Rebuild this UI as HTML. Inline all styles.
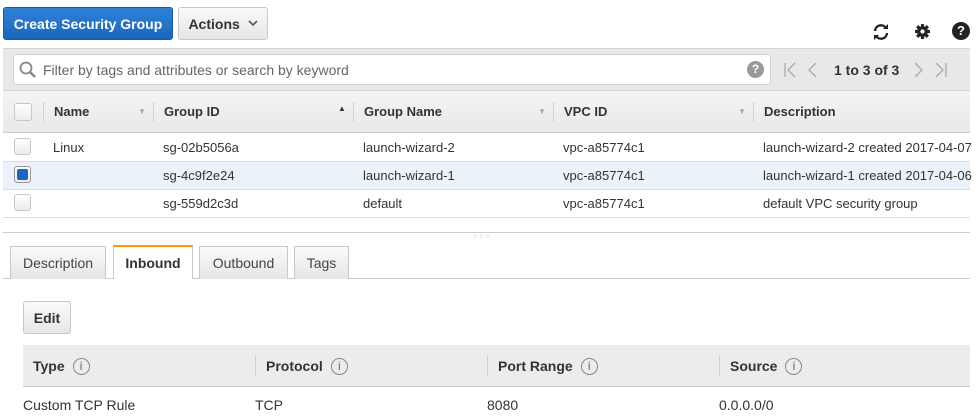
<!DOCTYPE html>
<html><head><style>
*{box-sizing:border-box}
body{margin:0;width:977px;height:420px;overflow:hidden;background:#fff;font-family:"Liberation Sans",Arial,sans-serif;font-size:13px;color:#333;position:relative}
.a{position:absolute}
.btn{position:absolute;border-radius:3px;font-weight:bold;font-size:14px;display:flex;align-items:center;justify-content:center}
.cb{position:absolute;width:17px;height:17px;border:1px solid #c8c8c8;border-radius:3px;background:linear-gradient(#fff,#ececec)}
.hd{position:absolute;font-weight:bold;font-size:13px;color:#333;display:flex;align-items:center}
.vd{position:absolute;width:1px;background:#d0d0d0}
.hl{position:absolute;height:1px;background:#ddd}
.tab{position:absolute;top:246px;height:33px;border:1px solid #c8c8c8;border-bottom:none;background:linear-gradient(#fafafa,#e6e6e6);font-size:14px;display:flex;align-items:center;justify-content:center;color:#444}
.ic{display:inline-block;width:17px;height:17px;border:1px solid #888;border-radius:50%;font-size:12px;font-weight:normal;text-align:center;line-height:15px;color:#666;margin-left:8px}
</style></head><body>
<div class="btn" style="left:3px;top:7px;width:170px;height:33px;background:linear-gradient(#2f82d8,#1a66bd);border:1px solid #1a5aa8;color:#fff">Create Security Group</div>
<div class="btn" style="left:178px;top:7px;width:90px;height:33px;background:linear-gradient(#fafafa,#e6e6e6);border:1px solid #c8c8c8;color:#333">Actions&nbsp;&nbsp;<svg width="10" height="7" viewBox="0 0 10 7"><path d="M1 1l4 4 4-4" stroke="#555" stroke-width="1.6" fill="none"/></svg></div>
<svg class="a" style="left:871px;top:22px" width="20" height="20" viewBox="0 0 20 20"><path d="M4 9a6 6 0 0 1 11-3" stroke="#222" stroke-width="2.4" fill="none"/><path d="M16 11a6 6 0 0 1-11 3" stroke="#222" stroke-width="2.4" fill="none"/><path d="M12 7h5V2z" fill="#222"/><path d="M8 13H3v5z" fill="#222"/></svg>
<svg class="a" style="left:914px;top:23px" width="17" height="17" viewBox="0 0 16 16"><circle cx="8" cy="8" r="5" fill="#222"/><g stroke="#222" stroke-width="3"><path d="M8 1v14M1 8h14M3 3l10 10M13 3L3 13"/></g><circle cx="8" cy="8" r="2" fill="#fff"/></svg>
<div class="a" style="left:952px;top:22px;width:18px;height:18px;border-radius:50%;background:#222;color:#fff;font-weight:bold;font-size:13px;text-align:center;line-height:18px">?</div>
<div class="a" style="left:3px;top:48px;width:967px;height:42px;background:#e8e8e8;border-top:1px solid #d5d5d5"></div>
<div class="a" style="left:13px;top:54px;width:758px;height:31px;background:#fff;border:1px solid #d0d0d0;border-radius:3px"></div>
<svg class="a" style="left:19px;top:61px" width="18" height="18" viewBox="0 0 18 18"><circle cx="7" cy="7" r="5.5" stroke="#888" stroke-width="1.8" fill="none"/><path d="M11 11l5 5" stroke="#888" stroke-width="2.5"/></svg>
<div class="a" style="left:43px;top:62px;font-size:14px;color:#666">Filter by tags and attributes or search by keyword</div>
<div class="a" style="left:747px;top:61px;width:17px;height:17px;border-radius:50%;background:#999;color:#fff;font-weight:bold;font-size:12px;text-align:center;line-height:17px">?</div>
<svg class="a" style="left:783px;top:62px" width="40" height="16" viewBox="0 0 40 16"><g stroke="#aaa" stroke-width="1.3" fill="none"><path d="M2 1v14M12 1L5 8l7 7M33 1l-7 7 7 7"/></g></svg>
<div class="a" style="left:834px;top:62px;font-size:14px;font-weight:bold;color:#333">1 to 3 of 3</div>
<svg class="a" style="left:912px;top:62px" width="40" height="16" viewBox="0 0 40 16"><g stroke="#aaa" stroke-width="1.3" fill="none"><path d="M3 1l7 7-7 7M24 1l7 7-7 7M34 1v14"/></g></svg>
<div class="a" style="left:3px;top:90px;width:967px;height:43px;background:linear-gradient(#f4f4f4,#e9e9e9);border-top:1px solid #d5d5d5;border-bottom:1px solid #ccc"></div>
<div class="cb" style="left:14px;top:103px;width:18px;height:18px"></div>
<div class="vd" style="left:43px;top:102px;height:20px"></div>
<div class="hd" style="left:54px;top:104px">Name</div><div class="a" style="left:138px;top:107px;font-size:8px;color:#aaa">&#9660;</div>
<div class="vd" style="left:153px;top:102px;height:20px"></div>
<div class="hd" style="left:164px;top:104px">Group ID</div><div class="a" style="left:338px;top:104px;font-size:8px;color:#333">&#9650;</div>
<div class="vd" style="left:353px;top:102px;height:20px"></div>
<div class="hd" style="left:364px;top:104px">Group Name</div><div class="a" style="left:538px;top:107px;font-size:8px;color:#aaa">&#9660;</div>
<div class="vd" style="left:553px;top:102px;height:20px"></div>
<div class="hd" style="left:564px;top:104px">VPC ID</div><div class="a" style="left:738px;top:107px;font-size:8px;color:#aaa">&#9660;</div>
<div class="vd" style="left:753px;top:102px;height:20px"></div>
<div class="hd" style="left:764px;top:104px">Description</div>
<div class="a" style="left:3px;top:162px;width:967px;height:28px;background:#eaf2fc"></div>
<div class="hl" style="left:3px;top:161px;width:967px"></div>
<div class="hl" style="left:3px;top:189px;width:967px"></div>
<div class="hl" style="left:3px;top:217px;width:967px"></div>
<div class="cb" style="left:14px;top:138px"></div>
<div class="cb" style="left:14px;top:166px;border-color:#999"></div><div class="a" style="left:17px;top:169px;width:11px;height:11px;background:#1a66c4;border-radius:2px"></div>
<div class="cb" style="left:14px;top:194px"></div>
<div class="a" style="left:53px;top:140px">Linux</div>
<div class="a" style="left:163px;top:140px">sg-02b5056a</div><div class="a" style="left:363px;top:140px">launch-wizard-2</div><div class="a" style="left:563px;top:140px">vpc-a85774c1</div><div class="a" style="left:763px;top:140px;white-space:nowrap">launch-wizard-2 created 2017-04-07</div>
<div class="a" style="left:163px;top:168px">sg-4c9f2e24</div><div class="a" style="left:363px;top:168px">launch-wizard-1</div><div class="a" style="left:563px;top:168px">vpc-a85774c1</div><div class="a" style="left:763px;top:168px;white-space:nowrap">launch-wizard-1 created 2017-04-06</div>
<div class="a" style="left:163px;top:196px">sg-559d2c3d</div><div class="a" style="left:363px;top:196px">default</div><div class="a" style="left:563px;top:196px">vpc-a85774c1</div><div class="a" style="left:763px;top:196px">default VPC security group</div>
<div class="hl" style="left:3px;top:232px;width:967px;background:#ccc"></div>
<div class="a" style="left:473px;top:233px;font-size:7px;color:#bbb;letter-spacing:2px">&#9675;&#9675;&#9675;</div>
<div class="hl" style="left:3px;top:278px;width:967px;background:#ccc"></div>
<div class="tab" style="left:10px;width:96px">Description</div>
<div class="tab" style="left:113px;width:80px;background:#fff;border-top:2px solid #f90;top:245px;height:34px;font-weight:bold;color:#333">Inbound</div>
<div class="tab" style="left:199px;width:89px">Outbound</div>
<div class="tab" style="left:294px;width:55px">Tags</div>
<div class="btn" style="left:23px;top:301px;width:48px;height:33px;background:linear-gradient(#fafafa,#e6e6e6);border:1px solid #c8c8c8;color:#333">Edit</div>
<div class="a" style="left:23px;top:345px;width:947px;height:42px;background:#ececec;border-bottom:1px solid #ccc"></div>
<div class="hd" style="left:33px;top:357px;font-size:14px;height:18px">Type<span class="ic">i</span></div>
<div class="vd" style="left:255px;top:356px;height:20px"></div>
<div class="hd" style="left:266px;top:357px;font-size:14px;height:18px">Protocol<span class="ic">i</span></div>
<div class="vd" style="left:487px;top:356px;height:20px"></div>
<div class="hd" style="left:498px;top:357px;font-size:14px;height:18px">Port Range<span class="ic">i</span></div>
<div class="vd" style="left:719px;top:356px;height:20px"></div>
<div class="hd" style="left:730px;top:357px;font-size:14px;height:18px">Source<span class="ic">i</span></div>
<div class="a" style="left:23px;top:397px;font-size:14px">Custom TCP Rule</div>
<div class="a" style="left:255px;top:397px;font-size:14px">TCP</div>
<div class="a" style="left:487px;top:397px;font-size:14px">8080</div>
<div class="a" style="left:719px;top:397px;font-size:14px">0.0.0.0/0</div>
</body></html>
